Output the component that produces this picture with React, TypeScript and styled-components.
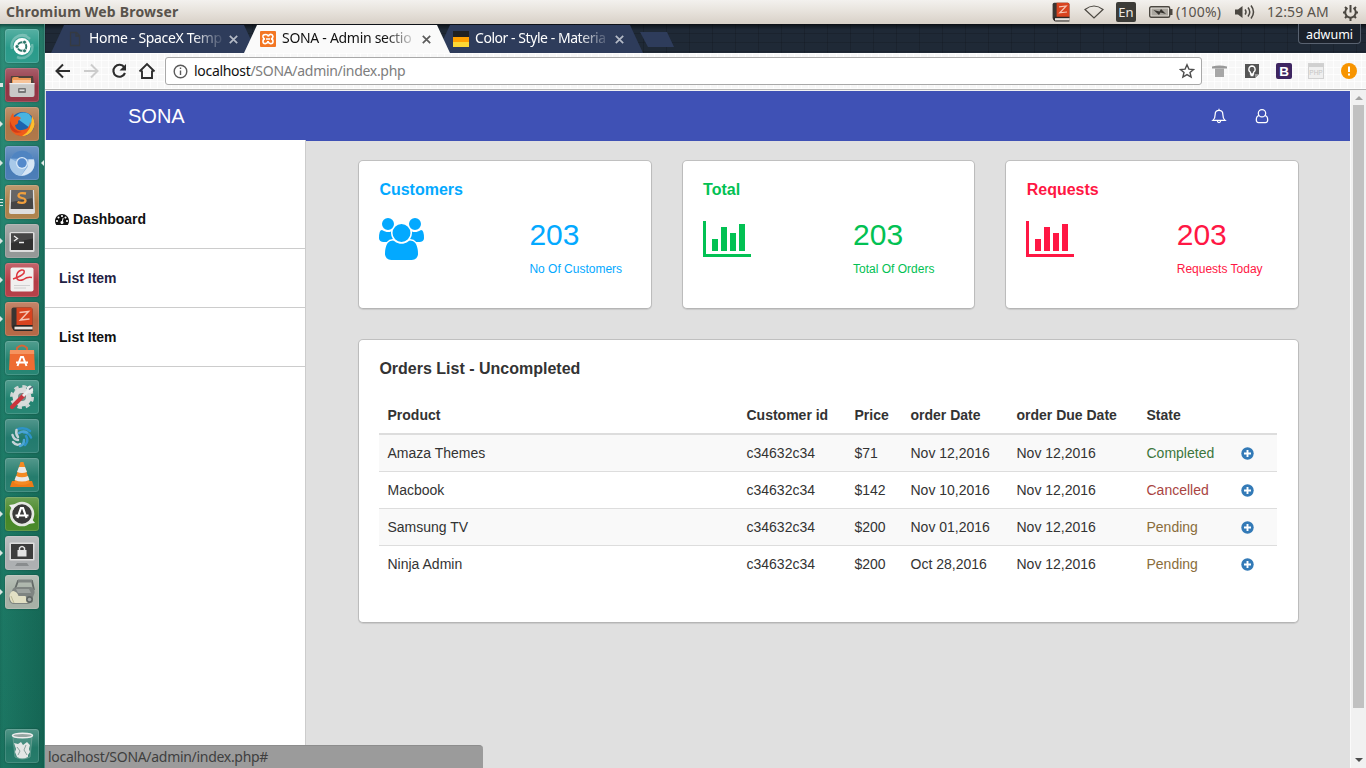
import React from 'react';
import styled, { createGlobalStyle } from 'styled-components';

const ui = '"Noto Sans", "Open Sans", sans-serif';
const body = '"Liberation Sans", Arial, sans-serif';

const GlobalStyle = createGlobalStyle`
  * { box-sizing: border-box; }
  body { margin: 0; overflow: hidden; font-family: ${body}; font-size: 14px; line-height: 20px; color: #212121; }
`;

const Desktop = styled.div`
  position: relative;
  display: flex;
  flex-direction: column;
  width: 1366px;
  height: 768px;
  overflow: hidden;
`;

/* ---------- system bar ---------- */
const SystemBar = styled.header`
  display: flex;
  flex: 0 0 24px;
  align-items: center;
  justify-content: space-between;
  padding: 0 7px 0 6px;
  background: linear-gradient(#f3f1ee, #e9e5df 40%, #d8d0c7);
  color: #59534c;
  font-family: ${ui};
`;
const WindowTitle = styled.span`
  font-size: 14px;
  font-weight: 700;
  letter-spacing: 0.2px;
`;
const Indicators = styled.div`
  display: flex;
  align-items: center;
  height: 24px;
`;
const Indicator = styled.span<{ $w: number; $gap?: number; $spacing?: number }>`
  display: flex;
  flex: 0 0 auto;
  width: ${p => p.$w}px;
  margin-left: ${p => p.$gap ?? 0}px;
  font-size: 14px;
  letter-spacing: ${p => p.$spacing ?? 0}px;
  white-space: nowrap;
`;
const Keyboard = styled.span`
  width: 20px;
  height: 20px;
  margin-left: 12px;
  border-radius: 2px;
  background: #3c3b37;
  color: #eeeae3;
  font-size: 13px;
  line-height: 21px;
  text-align: center;
`;

const Workspace = styled.div`
  display: flex;
  flex: 1;
  min-height: 0;
`;

/* ---------- launcher ---------- */
const Launcher = styled.nav`
  display: flex;
  flex: 0 0 45px;
  flex-direction: column;
  gap: 5px;
  padding: 5px 0 5px 5px;
  border-right: 1px solid #42877b;
  background: linear-gradient(90deg, rgba(255,255,255,.02), rgba(0,0,0,.13)), linear-gradient(#2b8d78, #1b7c67 45%, #17735f);
  box-shadow: inset 0 4px 4px -2px #0c3d34;
`;
const Tile = styled.div<{ $bg: string; $last?: boolean }>`
  position: relative;
  flex: 0 0 34px;
  width: 34px;
  height: 34px;
  margin-top: ${p => (p.$last ? 'auto' : 0)};
  border-radius: 3px;
  background: linear-gradient(rgba(255,255,255,.24), rgba(255,255,255,.03) 55%, rgba(255,255,255,.06)), ${p => p.$bg};
  box-shadow: inset 0 0 0 1px rgba(255,255,255,.14), 0 0 2px rgba(0,0,0,.35);
  svg { display: block; }
`;
const Running = styled.i<{ $kind: string }>`
  position: absolute;
  left: -5px;
  top: 14px;
  width: 3px;
  height: 6px;
  background: #d9e5e2;
  clip-path: ${p => (p.$kind === 'arrow' ? 'polygon(0 0, 100% 50%, 0 100%)' : p.$kind === 'bar' ? 'inset(1px 0)' : 'none')};
  ${p => p.$kind === 'lines' && 'background: repeating-linear-gradient(#d9e5e2 0 1px, transparent 1px 3px); height: 8px;'}
`;
const Focused = styled.i`
  position: absolute;
  left: 36px;
  top: 14px;
  width: 3px;
  height: 6px;
  background: #e3ecea;
  clip-path: polygon(100% 0, 0 50%, 100% 100%);
`;

/* ---------- browser chrome ---------- */
const Browser = styled.div`
  display: flex;
  flex: 1;
  flex-direction: column;
  min-width: 0;
`;
const TabStrip = styled.div`
  position: relative;
  display: flex;
  flex: 0 0 29px;
  align-items: flex-end;
  padding-left: 6px;
  background:
    linear-gradient(rgba(0,0,0,.55), transparent 6px),
    repeating-linear-gradient(90deg, rgba(0,0,0,.14) 0 1px, transparent 1px 23px),
    repeating-linear-gradient(rgba(0,0,0,.14) 0 1px, transparent 1px 9px),
    #1f2936;
`;
const TabBox = styled.div<{ $active?: boolean }>`
  position: relative;
  z-index: ${p => (p.$active ? 2 : 1)};
  display: flex;
  align-items: center;
  width: 206px;
  height: 28px;
  margin-right: -13px;
  padding: 0 17px 2px 16px;
  clip-path: polygon(0 100%, 13px 0, 193px 0, 206px 100%);
  background: ${p => (p.$active ? '#fafafa' : '#2e3c5b')};
  color: ${p => (p.$active ? '#111' : '#fff')};
  font: 14px/20px ${ui};
`;
const Favicon = styled.span`
  display: flex;
  width: 16px;
  height: 16px;
  margin-top: 2px;
`;
const TabLabel = styled.span<{ $spacing: number }>`
  flex: 0 0 133px;
  margin-left: 6px;
  white-space: nowrap;
  letter-spacing: ${p => p.$spacing}px;
  mask-image: linear-gradient(90deg, #000 103px, rgba(0,0,0,.12) 132px);
`;
const CloseIcon = styled.svg`
  margin: 2px 0 0 7px;
`;
const NewTab = styled.span`
  width: 35px;
  height: 15px;
  margin: 0 0 6px 10px;
  clip-path: polygon(0 0, 27px 0, 34px 100%, 8px 100%);
  background: #2e3c5b;
`;
const Profile = styled.span`
  width: 63px;
  height: 20px;
  margin: 0 5px auto auto;
  border: 1px solid #596270;
  border-top: 0;
  border-radius: 0 0 4px 4px;
  background: #1b212b;
  color: #fff;
  font: 12.500px/22px ${ui};
  text-align: center;
`;
const Toolbar = styled.div`
  display: flex;
  flex: 0 0 37px;
  align-items: center;
  padding: 0 9px 0 9px;
  border-bottom: 1px solid #b4b4b4;
  background:
    repeating-linear-gradient(90deg, rgba(255,255,255,.8) 0 1px, transparent 1px 7px),
    repeating-linear-gradient(rgba(255,255,255,.8) 0 1px, transparent 1px 7px),
    #f7f7f7;
`;
const NavIcons = styled.div`
  display: flex;
  gap: 10px;
`;
const Address = styled.div`
  display: flex;
  align-items: center;
  width: 1037px;
  height: 28px;
  margin-left: 9px;
  padding: 0 6px 0 7px;
  border: 1px solid #a9a9a9;
  border-radius: 3px;
  background: #fff;
  color: #7d7d7d;
  font: 14px/24px ${ui};
`;
const Url = styled.span`
  flex: 1;
  margin-left: 6px;
  letter-spacing: -0.3px;
  b { color: #111; font-weight: 400; }
`;
const Extensions = styled.div`
  display: flex;
  flex: 1;
  justify-content: space-between;
  margin-left: 9px;
`;

/* ---------- page ---------- */
const Viewport = styled.div`
  display: flex;
  flex: 1;
  min-height: 0;
  padding-top: 1px;
  background: #f1f1f1;
`;
const Page = styled.div`
  display: flex;
  flex: 1;
  flex-direction: column;
  background: #e0e0e0;
`;
const Navbar = styled.div`
  display: flex;
  flex: 0 0 50px;
  align-items: center;
  margin-left: 1px;
  padding: 0 80px 0 82px;
  background: #3f51b5;
  color: #fff;
`;
const Brand = styled.span`
  flex: 1;
  font-size: 20px;
`;
const NavAction = styled.span`
  display: flex;
  width: 16px;
  margin-left: 27.5px;
`;
const Columns = styled.div`
  display: flex;
  flex: 1;
  min-height: 0;
`;
const Sidebar = styled.aside`
  flex: 0 0 261px;
  margin-top: -1px;
  padding-top: 50px;
  border-right: 1px solid #ccc;
  background: #fff;
`;
const MenuItem = styled.div<{ $indent: number; $tone?: string }>`
  display: flex;
  align-items: center;
  gap: 4px;
  height: 59px;
  padding-left: ${p => p.$indent}px;
  border-bottom: 1px solid #ccc;
  color: ${p => p.$tone ?? '#111'};
  font-weight: 700;
`;
const Main = styled.main`
  flex: 1;
  padding: 19px 51px 0 52px;
`;
const Stats = styled.div`
  display: grid;
  grid-template-columns: repeat(3, 1fr);
  gap: 30px;
`;
const Card = styled.section<{ $tone?: string; $h: number }>`
  height: ${p => p.$h}px;
  padding: 18px 20px;
  border: 1px solid #c2c2c2;
  border-color: #c0c0c0 #bcbcbc #b5b5b5;
  border-radius: 5px;
  background: #fff;
  box-shadow: 0 1px 1px rgba(0,0,0,.1);
  color: ${p => p.$tone ?? '#333'};
`;
const CardTitle = styled.h2`
  margin: 0;
  padding-left: 0.4px;
  font-size: 16px;
  line-height: 22px;
`;
const StatBody = styled.div`
  display: flex;
  padding-top: 17px;
`;
const StatIcon = styled.div`
  flex: 0 0 150.400px;
  height: 42px;
`;
const Figure = styled.div`
  margin-top: -1px;
  font-size: 30px;
  line-height: 36px;
`;
const Caption = styled.div`
  margin-top: 7px;
  font-size: 12px;
  line-height: 18px;
`;
const OrdersCard = styled(Card)`
  margin-top: 30px;
`;
const Table = styled.table`
  width: 898px;
  margin-top: 17px;
  border-collapse: separate;
  border-spacing: 0;
  table-layout: fixed;
  th, td { height: 37px; padding: 0 0 0 8.5px; text-align: left; line-height: 20px; }
  th { height: 38px; border-bottom: 2px solid #ddd; }
  tbody tr:nth-child(odd) { background: #f9f9f9; }
  tbody tr:not(:last-child) td { border-bottom: 1px solid #ddd; }
  tbody tr:last-child td { height: 36px; }
  td:last-child { padding-left: 7.5px; }
  svg { display: block; }
`;
const State = styled.td<{ $tone: string }>`
  color: ${p => p.$tone};
`;
const Scrollbar = styled.div`
  display: flex;
  flex: 0 0 16px;
  flex-direction: column;
  align-items: center;
  padding: 4px 0 5px;
  border-left: 1px solid #fafafa;
  background: #f1f1f1;
`;
const Thumb = styled.div`
  width: 11px;
  height: 603px;
  margin: 5px 0 auto;
  background: #c1c1c1;
`;
const StatusBubble = styled.div`
  position: absolute;
  left: 45px;
  bottom: 0;
  width: 438px;
  height: 23px;
  padding-left: 3px;
  border-top: 1px solid #8d8d8d;
  border-radius: 0 4px 0 0;
  background: #9b9b9b;
  color: #3f3f3f;
  font: 14px/22px ${ui};
  letter-spacing: -0.3px;
`;

/* ---------- drawings ---------- */
const UsersIcon = () => (
  <svg width="45" height="42" viewBox="0 0 1920 1792" fill="currentColor">
    <path d="M593 896q-162 5-265 128h-134q-82 0-138-40.500t-56-118.500q0-353 124-353 6 0 43.500 21t97.500 42.500 119 21.500q67 0 133-23-5 37-5 66 0 139 81 256zM1664 1533q0 120-73 189.500t-194 69.500h-874q-121 0-194-69.500t-73-189.500q0-53 3.500-103.500t14-109 26.500-108.500 43-97.500 62-81 85.500-53.500 111.500-20q10 0 43 21.500t73 48 107 48 135 21.500 135-21.500 107-48 73-48 43-21.500q61 0 111.500 20t85.500 53.500 62 81 43 97.500 26.500 108.500 14 109 3.500 103.500zM640 256q0 106-75 181t-181 75-181-75-75-181 75-181 181-75 181 75 75 181zM1344 640q0 159-112.500 271.500t-271.500 112.500-271.500-112.500-112.500-271.500 112.500-271.500 271.500-112.500 271.500 112.500 112.500 271.500zM1920 865q0 78-56 118.500t-138 40.500h-134q-103-123-265-128 81-117 81-256 0-29-5-66 66 23 133 23 59 0 119-21.500t97.500-42.500 43.500-21q124 0 124 353zM1792 256q0 106-75 181t-181 75-181-75-75-181 75-181 181-75 181 75 75 181z" />
  </svg>
);
const ChartIcon = () => (
  <svg width="48" height="42" viewBox="0 0 48 42" fill="currentColor">
    <path d="M0 3h3v33h45v3H0zM9 21h6v12H9zM18 9h6v24h-6zM27 15h6v18h-6zM36 6h6v27h-6z" />
  </svg>
);
const GaugeIcon = () => (
  <svg width="14" height="14" viewBox="0 0 1792 1792" fill="currentColor">
    <path d="M384 1152q0-53-37.500-90.500t-90.500-37.500-90.500 37.500-37.500 90.500 37.500 90.500 90.500 37.500 90.500-37.500 37.500-90.500zM576 704q0-53-37.500-90.500t-90.500-37.500-90.500 37.500-37.500 90.500 37.500 90.500 90.500 37.500 90.500-37.500 37.500-90.500zM1004 1185l101-382q6-26-7.500-48.500t-38.500-29.500-48 6.500-30 39.500l-101 382q-60 5-107 43.500t-63 98.500q-20 77 20 146t117 89 146-20 89-117q16-60-6-117t-72-91zM1664 1152q0-53-37.500-90.500t-90.500-37.500-90.500 37.500-37.500 90.500 37.500 90.500 90.500 37.500 90.500-37.500 37.500-90.500zM1024 512q0-53-37.500-90.500t-90.500-37.500-90.500 37.500-37.500 90.500 37.500 90.500 90.500 37.500 90.500-37.500 37.500-90.500zM1472 704q0-53-37.500-90.500t-90.500-37.500-90.500 37.500-37.500 90.500 37.500 90.500 90.500 37.500 90.500-37.500 37.500-90.500zM1792 1152q0 261-141 483-19 29-54 29h-1402q-35 0-54-29-141-221-141-483 0-182 71-348t191-286 286-191 348-71 348 71 286 191 191 286 71 348z" />
  </svg>
);
const BellIcon = () => (
  <svg width="16" height="16" viewBox="0 0 16 16" fill="none" stroke="#fff" strokeWidth="1.250">
    <path d="M8 .8v1.4M1.9 12.4C3.5 11 4.2 9.300 4.200 6.200 4.200 3.800 5.800 2.300 8 2.300s3.800 1.500 3.800 3.900c0 3.100.7 4.800 2.300 6.200zM6.400 13c.1 1 .7 1.600 1.600 1.600S9.500 14 9.600 13" />
  </svg>
);
const UserIcon = () => (
  <svg width="16" height="16" viewBox="0 0 16 16" fill="none" stroke="#fff" strokeWidth="1.250">
    <circle cx="8" cy="5.200" r="3.700" />
    <path d="M5 7.600C3 7.800 2.300 9.300 2.300 12c0 1.500.9 2.500 2.200 2.500h7c1.300 0 2.200-1 2.200-2.500 0-2.700-.7-4.200-2.700-4.400" />
  </svg>
);
const PlusIcon = () => (
  <svg width="13" height="13" viewBox="0 0 13 13">
    <circle cx="6.500" cy="6.500" r="6.200" fill="#337ab7" />
    <path d="M6.500 3v7M3 6.500h7" stroke="#fff" strokeWidth="1.900" />
  </svg>
);
const Close = ({ dark }: { dark?: boolean }) => (
  <CloseIcon width="9" height="9" viewBox="0 0 9 9" stroke={dark ? '#5c5c5c' : '#b4bac6'} strokeWidth="1.700">
    <path d="M.8.8l7.400 7.400M8.200.8L.8 8.200" />
  </CloseIcon>
);

const BookArt = () => (
  <>
    <path d="M10 5h17q2 0 2 2v20H12q-4 0-4-4V7q0-2 2-2z" fill="#3a3532" />
    <path d="M13 5h14q2 0 2 2v16H13z" fill="#d8431f" />
    <path d="M9 24q0-1.500 2-1.500h18v1.500H11v3h18v1.500H12q-3 0-3-4.500z" fill="#2c2826" />
    <path d="M11 24.200h18v2.600H11z" fill="#e6e2dd" />
    <path d="M16 10l9-1-8 8.500 9-1" fill="none" stroke="#f6c5b4" strokeWidth="1.500" />
  </>
);

type App = { bg: string; run?: string; focused?: boolean; art: React.ReactNode };
const apps: App[] = [
  { bg: '#229786', art: <>
    <path d="M7 20a11 11 0 0 1 15-13M27 15a11 11 0 0 1-15 13M9 10q8-7 16 0" fill="none" stroke="#fff" strokeOpacity=".28" strokeWidth="2.500" />
    <circle cx="17" cy="17.500" r="8.500" fill="#fff" />
    <circle cx="17" cy="17.500" r="4.300" fill="none" stroke="#2a7669" strokeWidth="2" />
    <g fill="#2a7669" stroke="#fff" strokeWidth=".8"><circle cx="12" cy="17.500" r="2" /><circle cx="19.500" cy="13.200" r="2" /><circle cx="19.500" cy="21.800" r="2" /></g>
  </> },
  { bg: '#8e2d3d', run: 'bar', art: <>
    <path d="M6 8h22l1 9H5z" fill="#4d423b" /><path d="M7 11q0-2 2-2h4l1 1h12v6H7z" fill="#ee9855" /><path d="M8 12h18v4H8z" fill="#f7c49a" />
    <path d="M4.500 15h25v12q0 2-2 2h-21q-2 0-2-2z" fill="#c9c9c7" /><path d="M4.500 15h25v1.200h-25z" fill="#eee" />
    <rect x="13" y="20" width="8" height="5" rx="1" fill="#777" /><path d="M14.500 21.500h5v1.500h-5z" fill="#ddd" />
  </> },
  { bg: '#ab7140', run: 'arrow', art: <>
    <circle cx="17.500" cy="17" r="12" fill="#1d63ae" /><path d="M10 10q6-7 14-3 6 6 1 14z" fill="#48b4e0" />
    <path d="M27 9q5 8 0 15-5 6-12 5-10-2-10.500-12Q4.500 10 8 6l1 4q4-2 7 1l-3 3q1 3-3 4 1 6 7 5 8-1 8-8 1 2 0 4 3-5 2-10z" fill="#ee5b1c" />
    <path d="M27 9q5 8 0 15-4 5-10 5 10-5 10-20z" fill="#fcbf2c" /><path d="M5 14q3 10 12 11-9 3-12-5z" fill="#d23c19" />
  </> },
  { bg: '#4277b4', run: 'arrow', focused: true, art: <>
    <circle cx="17" cy="17.500" r="12.500" fill="#7eaadb" /><path d="M5.500 12.500A12.500 12.500 0 0 1 28.800 13H17z" fill="#4f84c1" />
    <path d="M16 30l5-8.500-4-3-11.500-6A12.500 12.500 0 0 0 16 30z" fill="#a8c9e9" /><path d="M16 30l6.500-9 1-7.500h5.500q3 14-13 16.500z" fill="#d7e6f5" />
    <circle cx="17" cy="17" r="6" fill="#d7e8f8" /><circle cx="17" cy="17" r="4.700" fill="#5489cb" />
  </> },
  { bg: '#a97c43', run: 'lines', art: <>
    <path d="M5 5h24l1 22q0 2-2 2H6q-2 0-2-2z" fill="#dedede" /><path d="M6.500 5h21l.8 19H5.700z" fill="#454545" /><path d="M6.500 5h21l.3 8-21.500 4z" fill="#666" />
    <path d="M21 8.500q-7.500-1.500-7.500 2c0 3.500 7 1.500 7 5 0 3.500-6 2.500-8 1.500" fill="none" stroke="#ef9f3e" strokeWidth="2.300" />
  </> },
  { bg: '#8f9392', run: 'arrow', art: <>
    <rect x="4.500" y="8" width="25" height="20" rx="1.500" fill="#ddd" /><rect x="6" y="9.500" width="22" height="16.500" fill="#303030" /><path d="M6 9.500h22v5L6 19z" fill="#474747" />
    <path d="M9 12l3.500 2.500L9 17M14 18.500h5" fill="none" stroke="#eee" strokeWidth="1.300" />
  </> },
  { bg: '#b1363f', run: 'arrow', art: <>
    <rect x="5.500" y="4.500" width="23" height="24" rx="2" fill="#f1f0ef" />
    <path d="M8 16q9-3 11-6 1-3.500-2.500-3-5 1.500-5 7 1 5 7 2.500 4-3 8.500-2" fill="none" stroke="#dd363e" strokeWidth="1.500" />
    <path d="M9 22.500h16M9 25h12" stroke="#d0d0d0" />
  </> },
  { bg: '#b1613d', run: 'arrow', art: <g transform="translate(-1.500 .5)"><BookArt /></g> },
  { bg: '#1b7f6c', art: <>
    <path d="M12 10V7q5-5 10 0v3" fill="none" stroke="#d56637" strokeWidth="2" /><path d="M5 9h24l1 20H4z" fill="#ee6c32" /><path d="M5 9h24l.2 4H4.800z" fill="#f5935f" />
    <path d="M12.500 25l3.500-9h2l3.500 9M11 21.500h12" fill="none" stroke="#fff" strokeWidth="2" />
  </> },
  { bg: '#1b7f6c', art: <>
    <circle cx="17" cy="17" r="10.500" fill="none" stroke="#cfd5d4" strokeWidth="3" strokeDasharray="4.400 3.850" /><circle cx="17" cy="17" r="9.500" fill="#d8dcdb" /><circle cx="17" cy="17" r="4" fill="#6c8f87" />
    <path d="M7 27L19 15" stroke="#c9343d" strokeWidth="4" strokeLinecap="round" /><path d="M18 16l6-6" stroke="#e9ecec" strokeWidth="3" /><path d="M22 7q4-4 6 2 1 3-3 4-4 0-3-6z" fill="#e9ecec" /><path d="M24 9.500l4-3" stroke="#567" strokeWidth="1.500" />
  </> },
  { bg: '#1b7669', art: <>
    <g fill="none" strokeWidth="2.500" strokeLinecap="round">
      <path d="M13 10q7-2 12 2M19 13.500q5 0 7 5M21 17q3 5-1 9" stroke="#2e93c8" /><path d="M15 25q-4 2-7-2M13 21q-4 0-5.500-5M13 18q-2.500-3-1.500-7" stroke="#c5d2d8" /><path d="M14 14q4-2.500 8-.5M19 21q0 5-4 6" stroke="#4ba5d4" />
    </g>
  </> },
  { bg: '#1e7868', art: <>
    <path d="M7 23h20l2 6H5z" fill="#ee7b17" /><path d="M15.500 4h3L25 25q-8 4-16 0z" fill="#f58a23" /><path d="M14 9h6l2 5q-5 2-10 0zM11 18q6 2.500 12 0l1.400 4q-7.400 3-14.800 0z" fill="#e9e9e9" />
  </> },
  { bg: '#40831f', run: 'arrow', art: <>
    <circle cx="17" cy="17" r="11" fill="#393939" stroke="#e4e7e1" strokeWidth="2.600" /><path d="M4 8l7-1-3 6zM30 26l-7 1 3-6z" fill="#eee" />
    <path d="M12.500 21l3.500-10h2l3.500 10M10.500 18.500h13" fill="none" stroke="#fff" strokeWidth="2.200" />
  </> },
  { bg: '#a9acae', run: 'arrow', art: <>
    <rect x="4.500" y="6.500" width="25" height="18" rx="1" fill="#ddd" /><rect x="6" y="8" width="22" height="15" fill="#3d3d3d" /><path d="M12 27h10l2 3H10z" fill="#898c8e" />
    <rect x="12.500" y="14" width="9" height="6.500" fill="#e3e3e3" /><path d="M14.500 14.500V12q2.500-3 5 0v2.500" fill="none" stroke="#e3e3e3" strokeWidth="1.500" />
  </> },
  { bg: '#a3ada2', run: 'arrow', art: <>
    <path d="M10 14l3-8h14l2 9" fill="none" stroke="#646b68" strokeWidth="1.800" /><path d="M13 6h14" stroke="#7e8582" strokeWidth="3" />
    <path d="M8 13.500q2-1.500 5-1.500h13q4 1 3.500 6l-3 8q-1 3-4 3H8q-4-1-4-6z" fill="#7e8481" />
    <path d="M11 14h13l2 4H13z" fill="#9da39f" />
    <path d="M4.500 21q1-5 4-5 4 1 5 5h7l3 7H8q-3-1-3.500-7z" fill="#e2e0c4" /><path d="M6 21l3 7" stroke="#bbb995" /><circle cx="24.500" cy="24.500" r="3.500" fill="#5f6663" /><circle cx="24.500" cy="24.500" r="1.800" fill="#a4aaa7" />
  </> },
  { bg: '#1b7462', art: <>
    <path d="M8 8h19l-2 20q-7.500 4-15 0z" fill="#fff" fillOpacity=".1" stroke="#6fa397" strokeWidth=".8" /><ellipse cx="17.500" cy="6.500" rx="10" ry="2.300" fill="#97a6a2" stroke="#eee" strokeWidth="1.500" />
    <path d="M9 14l4 1 3-2 2 3 4-3 3 3-1 4 1 3-2 3v2q-6 3-11 0l-2-5 1-3z" fill="#e3e7e5" /><path d="M12 18l3 4-2 4M21 16l-2 5 3 5" fill="none" stroke="#8ba39d" />
  </> },
];

const menu = [
  { label: 'Dashboard', indent: 10, icon: true },
  { label: 'List Item', indent: 14, tone: '#1f2244' },
  { label: 'List Item', indent: 14 },
];
const stats = [
  { title: 'Customers', caption: 'No Of Customers', tone: '#03a9ff', icon: <UsersIcon /> },
  { title: 'Total', caption: 'Total Of Orders', tone: '#02c153', icon: <ChartIcon /> },
  { title: 'Requests', caption: 'Requests Today', tone: '#ff1744', icon: <ChartIcon /> },
];
const tones: Record<string, string> = { Completed: '#3c763d', Cancelled: '#a94442', Pending: '#8a6d3b' };
const orders = [
  ['Amaza Themes', '$71', 'Nov 12,2016', 'Completed'],
  ['Macbook', '$142', 'Nov 10,2016', 'Cancelled'],
  ['Samsung TV', '$200', 'Nov 01,2016', 'Pending'],
  ['Ninja Admin', '$200', 'Oct 28,2016', 'Pending'],
];
const columns: [string, number][] = [
  ['Product', 359], ['Customer id', 108], ['Price', 56], ['order Date', 106], ['order Due Date', 130], ['State', 95], ['', 44],
];

export default function App() {
  return (
    <Desktop>
      <GlobalStyle />
      <SystemBar>
        <WindowTitle>Chromium Web Browser</WindowTitle>
        <Indicators>
          <Indicator $w={20}><svg width="20" height="20" viewBox="7 4 23 25"><BookArt /></svg></Indicator>
          <Indicator $w={20} $gap={13}>
            <svg width="20" height="14" viewBox="0 0 20 14" fill="none" stroke="#4b4741" strokeWidth="1.200"><path d="M1 4.500Q10-2.500 19 4.500L10 13z" /></svg>
          </Indicator>
          <Keyboard>En</Keyboard>
          <Indicator $w={24} $gap={13}>
            <svg width="24" height="12" viewBox="0 0 24 12"><rect x=".7" y=".7" width="20" height="10.600" rx="1.500" fill="none" stroke="#4b4741" strokeWidth="1.400" /><path d="M21 3h2.500v6H21z" fill="#4b4741" /><path d="M2.500 2.500h16.500v7H2.500z" fill="#aaa69f" /><path d="M4.500 4l6 1.500L12 3l5 5-5.500-1.500L10 9z" fill="#35322e" /></svg>
          </Indicator>
          <Indicator $w={47} $gap={3} $spacing={0.2}>(100%)</Indicator>
          <Indicator $w={20} $gap={12}>
            <svg width="20" height="16" viewBox="0 0 20 16"><path d="M0 5.500h3L7.500 2v12L3 10.500H0z" fill="#4b4741" /><path d="M10 5.500q2 2.500 0 5M13 3.500q3.500 4.500 0 9M16 1.500q5 6.500 0 13" fill="none" stroke="#4b4741" strokeWidth="1.500" /></svg>
          </Indicator>
          <Indicator $w={63} $gap={12} $spacing={0.1}>12:59 AM</Indicator>
          <Indicator $w={17} $gap={12}>
            <svg width="17" height="17" viewBox="0 0 17 17" fill="none" stroke="#4b4741"><path d="M5.500 4a5.300 5.300 0 1 0 6 0" strokeWidth="2" /><path d="M8.500 1v7.500" strokeWidth="2" /><path d="M8.500 14v3M1 8.500h2M14 8.500h2M3 3l1.500 1.500M14 3l-1.500 1.500M3 14l1.500-1.500M14 14l-1.500-1.500" strokeWidth="2" /></svg>
          </Indicator>
        </Indicators>
      </SystemBar>

      <Workspace>
        <Launcher>
          {apps.map((a, i) => (
            <Tile key={i} $bg={a.bg} $last={i === apps.length - 1}>
              {a.run && <Running $kind={a.run} />}
              <svg width="34" height="34" viewBox="0 0 34 34">{a.art}</svg>
              {a.focused && <Focused />}
            </Tile>
          ))}
        </Launcher>

        <Browser>
          <TabStrip>
            <TabBox>
              <Favicon><svg width="16" height="16" viewBox="0 0 16 16" fill="none" stroke="#353a42" strokeWidth="1.300"><path d="M3.500 1.500h6l3 3v10h-9zM9 1.500V5h3.500" /></svg></Favicon>
              <TabLabel $spacing={-0.32}>Home - SpaceX Temp</TabLabel>
              <Close />
            </TabBox>
            <TabBox $active>
              <Favicon><svg width="16" height="16" viewBox="0 0 16 16"><rect width="16" height="16" rx="1" fill="#f37623" /><path d="M5.500 3.500q-3 0-2.500 2.500.5 2 2 2-2 0-2 2.500 0 2.500 3 2 2-.5 2-2.500 0 2 2 2.500 3 .5 3-2 0-2.500-2-2.500 2-.5 2-2.500-.5-2.500-3-2-1.500.5-1.500 2-.5-2-3-2zM6 8h4" fill="none" stroke="#fff" strokeWidth="1.600" /></svg></Favicon>
              <TabLabel $spacing={-0.3}>SONA - Admin sectio</TabLabel>
              <Close dark />
            </TabBox>
            <TabBox>
              <Favicon><svg width="16" height="16"><path d="M0 0h16v6H0z" fill="#212121" /><path d="M0 6h16v5H0z" fill="#ffa000" /><path d="M0 11h16v5H0z" fill="#fdd835" /></svg></Favicon>
              <TabLabel $spacing={-0.45}>Color - Style - Materia</TabLabel>
              <Close />
            </TabBox>
            <NewTab />
            <Profile>adwumi</Profile>
          </TabStrip>

          <Toolbar>
            <NavIcons>
              <svg width="18" height="18" viewBox="0 0 18 18" fill="none" stroke="#2d2d2d" strokeWidth="2"><path d="M16 9H3M9 2.500L2.500 9 9 15.500" /></svg>
              <svg width="18" height="18" viewBox="0 0 18 18" fill="none" stroke="#ccc" strokeWidth="2"><path d="M2 9h13M9 2.500L15.500 9 9 15.500" /></svg>
              <svg width="18" height="18" viewBox="0 0 18 18"><path d="M14.300 5.300A6 6 0 1 0 15 11" fill="none" stroke="#2d2d2d" strokeWidth="2.100" /><path d="M16 2v6.500H9.500z" fill="#2d2d2d" /></svg>
              <svg width="18" height="18" viewBox="0 0 18 18" fill="none" stroke="#2d2d2d" strokeWidth="1.900"><path d="M1.500 9.500L9 2l7.500 7.500M4 8.500V16h10V8.500" /></svg>
            </NavIcons>
            <Address>
              <svg width="15" height="15" viewBox="0 0 15 15" fill="none" stroke="#5a5a5a" strokeWidth="1.400"><circle cx="7.500" cy="7.500" r="6.300" /><path d="M7.500 3.500v1.600M7.500 6.500V11" /></svg>
              <Url><b>localhost</b>/SONA/admin/index.php</Url>
              <svg width="16" height="16" viewBox="0 0 16 16" fill="none" stroke="#4e4e4e" strokeWidth="1.400"><path d="M8 1.800l1.900 4.300 4.600.4-3.500 3 1.100 4.500L8 11.600 3.900 14 5 9.500l-3.500-3 4.600-.4z" /></svg>
            </Address>
            <Extensions>
              <svg width="17" height="16" viewBox="0 0 17 16"><path d="M1 3.500q7.500-2 15 0v2H1z" fill="#999" /><path d="M4 5.500h9V14H4z" fill="#a6a6a6" /></svg>
              <svg width="16" height="16" viewBox="0 0 16 16"><path d="M1 1h14v10l-4 4H1z" fill="#555" /><path d="M11 15v-4h4z" fill="#999" /><path d="M8 3a3.400 3.400 0 0 0-1.500 6.300V11h3V9.300A3.400 3.400 0 0 0 8 3zM6.500 12.500h3" fill="none" stroke="#fff" strokeWidth="1.300" /></svg>
              <svg width="16" height="16" viewBox="0 0 16 16"><rect width="16" height="16" rx="2" fill="#3e2561" /><text x="8" y="12.800" textAnchor="middle" fontFamily="Liberation Sans" fontWeight="700" fontSize="13.500" fill="#fff">B</text></svg>
              <svg width="17" height="16" viewBox="0 0 17 16"><rect x=".5" y=".5" width="15" height="15" fill="#efefef" stroke="#d2d2d2" /><path d="M1 1h15v3H1z" fill="#d0d0d0" /><text x="8" y="11.800" textAnchor="middle" fontFamily="Liberation Sans" fontSize="6.500" fill="#c6c6c6">PHP</text></svg>
              <svg width="16" height="16" viewBox="0 0 16 16"><circle cx="8" cy="8" r="8" fill="#f79400" /><path d="M8 3.500v5.500M8 10.500v2" stroke="#fff" strokeWidth="2" /></svg>
            </Extensions>
          </Toolbar>

          <Viewport>
            <Page>
              <Navbar>
                <Brand>SONA</Brand>
                <NavAction><BellIcon /></NavAction>
                <NavAction><UserIcon /></NavAction>
              </Navbar>
              <Columns>
                <Sidebar>
                  {menu.map((m, i) => (
                    <MenuItem key={i} $indent={m.indent} $tone={m.tone}>{m.icon && <GaugeIcon />}{m.label}</MenuItem>
                  ))}
                </Sidebar>
                <Main>
                  <Stats>
                    {stats.map(s => (
                      <Card key={s.title} $tone={s.tone} $h={149}>
                        <CardTitle>{s.title}</CardTitle>
                        <StatBody>
                          <StatIcon>{s.icon}</StatIcon>
                          <div>
                            <Figure>203</Figure>
                            <Caption>{s.caption}</Caption>
                          </div>
                        </StatBody>
                      </Card>
                    ))}
                  </Stats>
                  <OrdersCard $h={284}>
                    <CardTitle>Orders List - Uncompleted</CardTitle>
                    <Table>
                      <colgroup>{columns.map(([name, w]) => <col key={name} width={w} />)}</colgroup>
                      <thead><tr>{columns.map(([name]) => <th key={name}>{name}</th>)}</tr></thead>
                      <tbody>
                        {orders.map(([product, price, date, state]) => (
                          <tr key={product}>
                            <td>{product}</td>
                            <td>c34632c34</td>
                            <td>{price}</td>
                            <td>{date}</td>
                            <td>Nov 12,2016</td>
                            <State $tone={tones[state]}>{state}</State>
                            <td><PlusIcon /></td>
                          </tr>
                        ))}
                      </tbody>
                    </Table>
                  </OrdersCard>
                </Main>
              </Columns>
            </Page>
            <Scrollbar>
              <svg width="8" height="5"><path d="M0 5l4-4 4 4z" fill="#a3a3a3" /></svg>
              <Thumb />
              <svg width="8" height="5"><path d="M0 0h8L4 4z" fill="#4d4d4d" /></svg>
            </Scrollbar>
          </Viewport>
        </Browser>
      </Workspace>
      <StatusBubble>localhost/SONA/admin/index.php#</StatusBubble>
    </Desktop>
  );
}
